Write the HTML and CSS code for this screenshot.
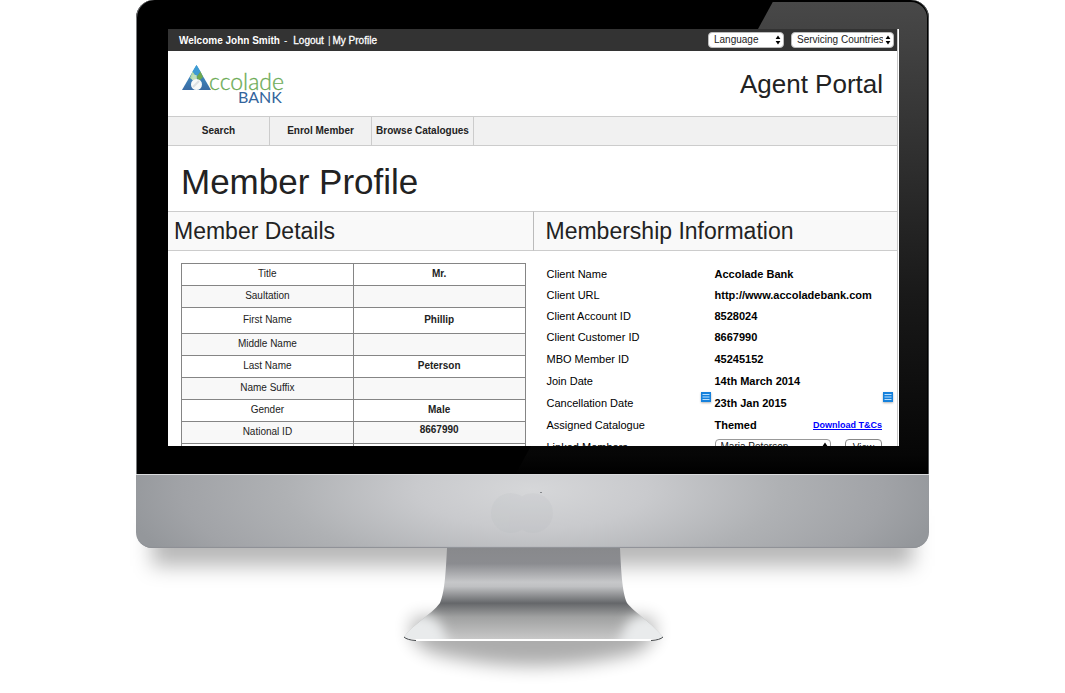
FILE: index.html
```html
<!DOCTYPE html>
<html lang="en">
<head>
<meta charset="utf-8">
<title>Agent Portal - Member Profile</title>
<link rel="stylesheet" href="styles.css">
</head>
<body>
<div class="scene">
  <div class="monitor">
    <div class="bezel">
      <div class="screen">
        <div class="topbar">
          <div class="account">
            <strong>Welcome John Smith</strong>
            <span class="dash">-</span>
            <a href="#logout">Logout</a>
            <span class="bar">|</span>
            <a href="#profile">My Profile</a>
          </div>
          <div class="pickers">
            <span class="picker"><select class="language" aria-label="Language"><option>Language</option></select><svg class="arrows" viewBox="0 0 6 10" aria-hidden="true"><path d="M3 0.5 5.4 4H.6zM3 9.500 5.400 6H.6z"/></svg></span>
            <span class="picker"><select class="countries" aria-label="Servicing Countries"><option>Servicing Countries</option></select><svg class="arrows" viewBox="0 0 6 10" aria-hidden="true"><path d="M3 0.5 5.4 4H.6zM3 9.500 5.400 6H.6z"/></svg></span>
          </div>
        </div>
        <header class="header">
          <svg class="logo" viewBox="0 0 104 42" role="img" aria-label="Accolade Bank">
            <defs>
              <linearGradient id="tri" x1="0" y1="0" x2="0" y2="1"><stop offset="0" stop-color="#3f9bd0"/><stop offset="1" stop-color="#3a6ba3"/></linearGradient>
            </defs>
            <path d="M15.500 1 30 26H1z" fill="url(#tri)"/>
            <path d="M15.500 1 19.500 7.500 15.500 13 11.500 7.500z" fill="#3e9bd3"/>
            <path d="M11.500 7.500 15.500 13 13 17 9 14z" fill="#b5dba6"/>
            <path d="M19.500 7.500 22 13 18 17 15.500 13z" fill="#6fa84f"/>
            <path d="M11.500 11 15.500 11 16 16 11 16z" fill="#c2dfbd"/>
            <circle cx="15.500" cy="20.500" r="5.500" fill="#f7f8f8"/>
            <path d="M12 23 18 17" stroke="#dcdfe2" stroke-width="2"/>
            <text class="logo-name" x="28" y="26">ccolade</text>
            <text class="logo-bank" x="57" y="39">BANK</text>
          </svg>
          <div class="portal">Agent Portal</div>
        </header>
        <nav class="nav">
          <a href="#search">Search</a>
          <a href="#enrol">Enrol Member</a>
          <a href="#catalogues">Browse Catalogues</a>
        </nav>
        <h1 class="title">Member Profile</h1>
        <main class="columns">
          <section class="panel">
            <h2 class="panel-title">Member Details</h2>
            <table class="details">
              <tr><th scope="row">Title</th><td>Mr.</td></tr>
              <tr><th scope="row">Saultation</th><td></td></tr>
              <tr class="tall"><th scope="row">First Name</th><td>Phillip</td></tr>
              <tr><th scope="row">Middle Name</th><td></td></tr>
              <tr><th scope="row">Last Name</th><td>Peterson</td></tr>
              <tr><th scope="row">Name Suffix</th><td></td></tr>
              <tr><th scope="row">Gender</th><td>Male</td></tr>
              <tr><th scope="row">National ID</th><td class="top">8667990</td></tr>
              <tr><th scope="row"></th><td></td></tr>
            </table>
          </section>
          <section class="panel">
            <h2 class="panel-title info-title">Membership Information</h2>
            <dl class="info">
              <div class="row short"><dt>Client Name</dt><dd>Accolade Bank</dd></div>
              <div class="row short"><dt>Client URL</dt><dd>http://www.accoladebank.com</dd></div>
              <div class="row short"><dt>Client Account ID</dt><dd>8528024</dd></div>
              <div class="row"><dt>Client Customer ID</dt><dd>8667990</dd></div>
              <div class="row"><dt>MBO Member ID</dt><dd>45245152</dd></div>
              <div class="row"><dt>Join Date</dt><dd>14th March 2014</dd></div>
              <div class="row"><dt>Cancellation Date</dt><dd class="marked">23th Jan 2015
                <svg class="note note-left" viewBox="0 0 10 10" aria-hidden="true"><path fill="#1681dc" d="M0 0h10v10H0z"/><path stroke="#b9e0ff" d="M1.500 2.500h7M1.500 5h7M1.500 7.500h7"/></svg>
                <svg class="note note-right" viewBox="0 0 10 10" aria-hidden="true"><path fill="#1681dc" d="M0 0h10v10H0z"/><path stroke="#b9e0ff" d="M1.500 2.500h7M1.500 5h7M1.500 7.500h7"/></svg>
              </dd></div>
              <div class="row"><dt>Assigned Catalogue</dt><dd>Themed <a class="terms" href="#terms">Download T&amp;Cs</a></dd></div>
              <div class="row"><dt><label for="linked">Linked Members</label></dt><dd><span class="picker"><select class="linked" id="linked"><option>Maria Peterson</option></select><svg class="arrows" viewBox="0 0 6 10" aria-hidden="true"><path d="M3 0.5 5.400 4H.6zM3 9.500 5.400 6H.6z"/></svg></span><button class="view" type="button">View</button></dd></div>
            </dl>
          </section>
        </main>
      </div>
    </div>
    <div class="chin">
      <svg class="mark" viewBox="0 0 68 44" aria-hidden="true"><g fill="#a9adb2" opacity=".1"><circle cx="22" cy="23" r="20"/><circle cx="44" cy="23" r="20"/></g><path d="M51 2h2v1h-2z" fill="#85888c"/></svg>
    </div>
  </div>
  <svg class="stand" viewBox="0 0 301 145" aria-hidden="true">
    <defs>
      <linearGradient id="metal" x1="0" y1="0" x2="0" y2="92" gradientUnits="userSpaceOnUse">
        <stop offset="0" stop-color="#88898c"/><stop offset=".17" stop-color="#8b8c90"/>
        <stop offset=".37" stop-color="#c6c7c9"/><stop offset=".42" stop-color="#bfc0c2"/>
        <stop offset=".6" stop-color="#65676a"/><stop offset=".75" stop-color="#a0a1a1"/>
        <stop offset="1" stop-color="#c9c9c9"/>
      </linearGradient>
      <filter id="soft" x="-30%" y="-80%" width="160%" height="260%"><feGaussianBlur stdDeviation="9"/></filter>
      <filter id="glow" x="-50%" y="-50%" width="200%" height="200%"><feGaussianBlur stdDeviation="6"/></filter>
      <clipPath id="shape"><path d="M65 0H238C239 20 240 44 245 55C252 64 272 77 281 89C278 92 272 93 260 93H40C30 93 25 92 22 89C30 77 49 67 58 55C63 44 64 20 65 0z"/></clipPath>
    </defs>
    <path d="M32 70H270C276 86 272 98 250 106Q151 130 54 106C30 98 26 86 32 70z" fill="#000" opacity=".32" filter="url(#soft)"/>
    <g clip-path="url(#shape)">
      <path d="M0 0h301v94H0z" fill="url(#metal)"/>
      <path d="M-20 120V66H44L58 74 76 120zM321 120V66H259L245 74 227 120z" fill="#e9ebec" filter="url(#glow)"/>
      <path d="M22 91H281V95H22z" fill="#fff"/>
    </g>
    <path d="M22 89Q25 92 34 92.500M281 89Q278 92 269 92.500" fill="none" stroke="#45484b"/>
  </svg>
</div>
</body>
</html>
```
FILE: styles.css
```css
* {
  box-sizing: border-box;
}

body {
  margin: 0;
  background: #fff;
  color: #222;
  font-family: "Liberation Sans", Arial, sans-serif;
  font-size: 10px;
  overflow: hidden;
}

.scene {
  padding: 0 136px;
}

.monitor {
  position: relative;
}

/* soft shadow under the case */
.monitor::after {
  content: "";
  position: absolute;
  z-index: -1;
  inset: auto 16px -18px;
  height: 50px;
  background: rgba(0, 0, 0, 0.28);
  filter: blur(10px);
}

.bezel {
  position: relative;
  padding: 29px 30px 28px 32px;
  background: #000;
  border-radius: 18px 18px 0 0;
  box-shadow: inset 1px 0 #77797b, inset -1px 0 #55585a;
}

/* glare across the glass */
.bezel::before {
  content: "";
  position: absolute;
  inset: 2px 2px 0 0;
  border-radius: 0 16px 0 0;
  background: linear-gradient(#484848, #303030 32%, #191919 62%, #060606 96%, #000);
  clip-path: polygon(80.500% 0, 100% 0, 100% 100%, 48% 100%);
}

.screen {
  position: relative;
  aspect-ratio: 731 / 417;
  overflow: hidden;
  background: #fff;
  border-right: 1px solid #fff;
}

.screen > * {
  border-right: 1px solid #c8c8c8;
}

.topbar {
  display: flex;
  align-items: center;
  justify-content: space-between;
  height: 22px;
  padding: 0 3px 0 11px;
  background: #333;
  color: #fff;
}

.account {
  display: flex;
  align-items: center;
}

.account a {
  color: #fff;
  text-decoration: none;
  -webkit-text-stroke: 0.3px #fff;
}

.dash {
  padding: 0 6px 0 4px;
}

.bar {
  padding: 0 2px 0 4px;
}

.pickers {
  display: flex;
  gap: 7px;
}

.picker {
  position: relative;
  display: inline-flex;
  vertical-align: middle;
}

.picker select {
  appearance: none;
  height: 16px;
  padding: 0 10px 1px 5px;
  border: 1px solid #bbb;
  border-radius: 4px;
  background: #fff;
  color: #222;
  font: 10px "Liberation Sans", Arial, sans-serif;
}

.picker .language {
  width: 76px;
}

.picker .countries {
  width: 103px;
}

.picker .linked {
  width: 116px;
  height: 17px;
  border-color: #999;
}

.arrows {
  position: absolute;
  top: 3px;
  right: 3px;
  width: 6px;
  height: 10px;
  pointer-events: none;
}

.header {
  display: flex;
  align-items: center;
  justify-content: space-between;
  height: 66px;
  padding: 2px 14px 0 13px;
  border-bottom: 1px solid #ccc;
}

.logo {
  width: 104px;
  height: 42px;
}

.logo-name {
  font: 300 23px Lato, sans-serif;
  fill: #6bab55;
  stroke: #6bab55;
  stroke-width: 0.3px;
}

.logo-bank {
  font: 400 16px Lato, sans-serif;
  fill: #33659c;
}

.portal {
  font-size: 26px;
}

.nav {
  display: flex;
  height: 29px;
  background: #f1f1f1;
  border-bottom: 1px solid #ccc;
}

.nav a {
  width: 102px;
  border-right: 1px solid #ccc;
  color: #222;
  font-weight: bold;
  line-height: 28px;
  text-align: center;
  text-decoration: none;
}

.title {
  margin: 0;
  padding: 0 13px;
  font-size: 35px;
  font-weight: normal;
  line-height: 72px;
  height: 65px;
}

.columns {
  display: grid;
  grid-template-columns: 1fr 1fr;
}

.panel-title {
  height: 40px;
  margin: 0;
  padding-left: 6px;
  border-top: 1px solid #ccc;
  border-bottom: 1px solid #ccc;
  background: #f9f9f9;
  font-size: 23px;
  font-weight: normal;
  line-height: 38px;
}

.info-title {
  padding-left: 12px;
  border-left: 1px solid #bbb;
}

.details {
  width: calc(100% - 20px);
  margin: 12px 7px 0 13px;
  border-collapse: collapse;
  table-layout: fixed;
}

.details tr {
  height: 22px;
}

.details .tall {
  height: 26px;
}

.details tr:nth-child(even) {
  background: #f8f8f8;
}

.details th,
.details td {
  padding: 0 0 2px;
  border: 1px solid #858585;
  text-align: center;
}

.details th {
  font-weight: normal;
}

.details td {
  font-weight: bold;
}

.details .top {
  padding-bottom: 6px;
}

.info {
  margin: 12px 15px 0 14px;
  color: #000;
  font-size: 11px;
}

.row {
  display: flex;
  align-items: center;
  height: 22px;
}

.row.short {
  height: 21px;
}

.row dt {
  width: 168px;
}

.row dd {
  display: flex;
  flex: 1;
  align-items: center;
  justify-content: space-between;
  margin: 0;
  font-weight: bold;
}

.marked {
  position: relative;
}

.note {
  position: absolute;
  top: -5px;
  width: 10px;
  height: 10px;
  box-shadow: 0 1px 2px rgba(0, 0, 0, 0.3);
}

.note-left {
  left: -14px;
}

.note-right {
  right: -11px;
}

.terms {
  color: #00f;
  font-size: 9px;
}

.view {
  width: 37px;
  height: 17px;
  padding: 0;
  border: 1px solid #888;
  border-radius: 4px;
  background: #fff;
  color: #222;
  font: 10px "Liberation Sans", Arial, sans-serif;
}

.chin {
  display: grid;
  place-items: center;
  height: 74px;
  border-top: 1px solid #dadbdd;
  border-radius: 0 0 16px 16px;
  background: radial-gradient(ellipse 52% 190% at 50% 20%, #d6d7d9 0%, #c9cacd 28%, #afb1b4 60%, #a1a3a7 85%, #94979b 100%);
  box-shadow: inset 0 -2px 1px -1px #8d9095;
}

.mark {
  width: 68px;
  height: 44px;
  margin-right: 20px;
}

.stand {
  position: relative;
  display: block;
  width: 301px;
  margin: 0 auto;
}
```
